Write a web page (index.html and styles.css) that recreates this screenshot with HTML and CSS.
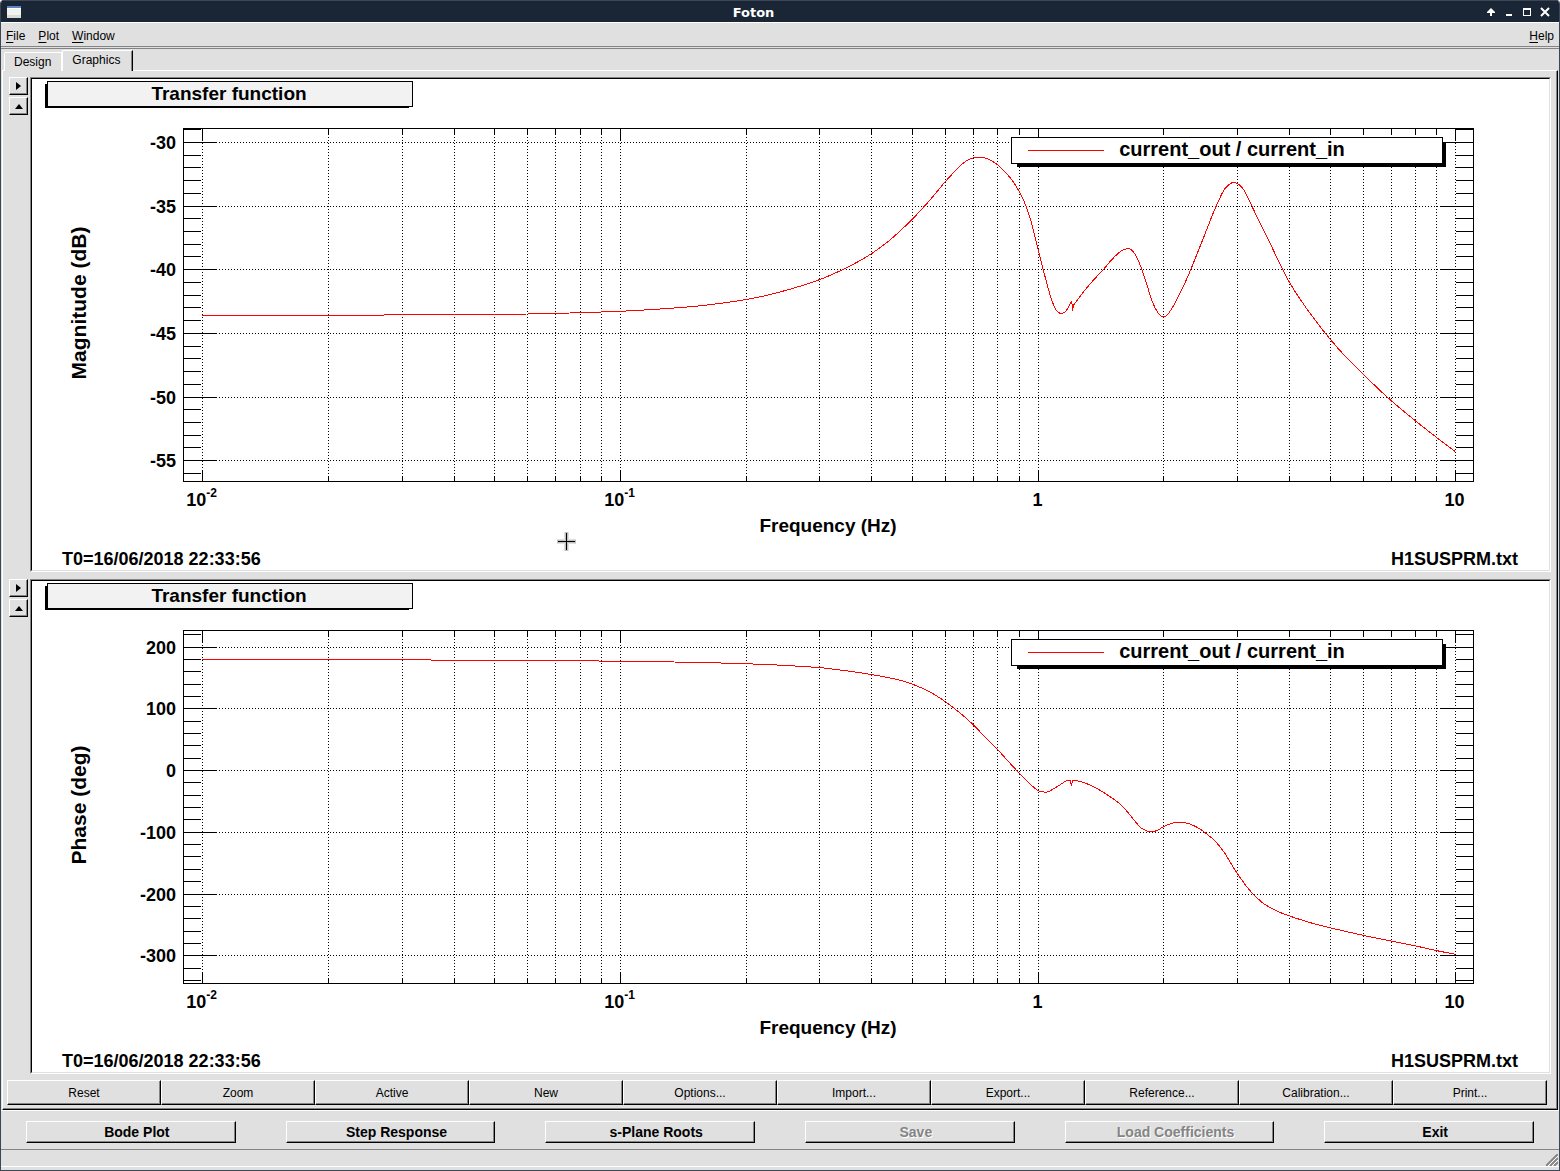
FILE: index.html
```
<!DOCTYPE html>
<html lang="en">
<head>
    <meta charset="UTF-8">
    <meta name="viewport" content="width=device-width, initial-scale=1.0">
    <title>Foton</title>
    <link rel="stylesheet" href="styles.css">
</head>
<body>
    <div class="window">
        <header class="titlebar">
            <svg class="app-icon" width="14" height="12" viewBox="0 0 14 12">
                <rect width="14" height="12" fill="#f2f2ee"/>
                <rect width="14" height="2" fill="#5b87c4"/>
                <rect y="2" width="14" height="1" fill="#ffffff"/>
                <rect y="9" width="14" height="3" fill="#dcdcd6"/>
            </svg>
            <h1 class="title">Foton</h1>
            <div class="window-buttons">
                <button class="winbtn" aria-label="Shade">
                    <svg width="10" height="10" viewBox="0 0 10 10"><path d="M5 1L9 5V6H6V9H4V6H1V5Z" fill="#fff"/></svg>
                </button>
                <button class="winbtn" aria-label="Minimize">
                    <svg width="10" height="10" viewBox="0 0 10 10"><path d="M2 7H8V9H2Z" fill="#fff"/></svg>
                </button>
                <button class="winbtn" aria-label="Maximize">
                    <svg width="10" height="10" viewBox="0 0 10 10"><path d="M1 1H9V9H1ZM2 3V8H8V3Z" fill="#fff" fill-rule="evenodd"/></svg>
                </button>
                <button class="winbtn" aria-label="Close">
                    <svg width="10" height="10" viewBox="0 0 10 10"><path d="M1 1L9 9M9 1L1 9" stroke="#fff" stroke-width="2"/></svg>
                </button>
            </div>
        </header>

        <nav class="menubar">
            <a href="#"><u>F</u>ile</a>
            <a href="#"><u>P</u>lot</a>
            <a href="#"><u>W</u>indow</a>
            <a href="#" class="help"><u>H</u>elp</a>
        </nav>

        <div class="tabs">
            <button class="tab">Design</button>
            <button class="tab active">Graphics</button>
        </div>

        <main class="panel">
            <section class="pad">
                <div class="side">
                    <button class="arrow" aria-label="Options"><svg width="5" height="8" viewBox="0 0 5 8"><path d="M0 0L5 4L0 8Z"/></svg></button>
                    <button class="arrow" aria-label="Collapse"><svg width="8" height="5" viewBox="0 0 8 5"><path d="M0 5L4 0L8 5Z"/></svg></button>
                </div>
                <div class="canvas">
                    <div class="canvas-inner">
                        <svg class="plot" id="magnitude" viewBox="32 79 1517 491">
                            <g class="axes"></g>
                            <path class="shadow" d="M45 84H409V108H45Z"/>
                            <rect class="box title-box" x="47.5" y="81.5" width="365" height="25"/>
                            <text class="heading" x="229" y="100">Transfer function</text>
                            <path class="shadow" d="M1017 142H1446V167H1017Z"/>
                            <rect class="box" x="1011.5" y="137.5" width="431" height="26"/>
                            <path class="curve" d="M1028 150.5H1104"/>
                            <text class="legend" x="1232" y="156">current_out / current_in</text>
                            <text class="ytitle" transform="translate(86 303) rotate(-90)">Magnitude (dB)</text>
                            <text class="heading" x="828" y="532">Frequency (Hz)</text>
                            <text class="note" x="62" y="565">T0=16/06/2018 22:33:56</text>
                            <text class="note end" x="1518" y="565">H1SUSPRM.txt</text>
                            <path class="cross-halo" d="M557 541.5H576M566.5 532V551"/>
                            <path class="cross-edge" d="M557 541.5H576M566.5 532V551"/>
                            <path class="cross" d="M558 541.5H575M566.5 533V550"/>
                        </svg>
                    </div>
                </div>
            </section>

            <section class="pad">
                <div class="side">
                    <button class="arrow" aria-label="Options"><svg width="5" height="8" viewBox="0 0 5 8"><path d="M0 0L5 4L0 8Z"/></svg></button>
                    <button class="arrow" aria-label="Collapse"><svg width="8" height="5" viewBox="0 0 8 5"><path d="M0 5L4 0L8 5Z"/></svg></button>
                </div>
                <div class="canvas">
                    <div class="canvas-inner">
                        <svg class="plot" id="phase" viewBox="32 581 1517 491">
                            <g class="axes"></g>
                            <path class="shadow" d="M45 586H409V610H45Z"/>
                            <rect class="box title-box" x="47.5" y="583.5" width="365" height="25"/>
                            <text class="heading" x="229" y="602">Transfer function</text>
                            <path class="shadow" d="M1017 644H1446V669H1017Z"/>
                            <rect class="box" x="1011.5" y="639.5" width="431" height="26"/>
                            <path class="curve" d="M1028 652.5H1104"/>
                            <text class="legend" x="1232" y="658">current_out / current_in</text>
                            <text class="ytitle" transform="translate(86 805) rotate(-90)">Phase (deg)</text>
                            <text class="heading" x="828" y="1034">Frequency (Hz)</text>
                            <text class="note" x="62" y="1067">T0=16/06/2018 22:33:56</text>
                            <text class="note end" x="1518" y="1067">H1SUSPRM.txt</text>
                        </svg>
                    </div>
                </div>
            </section>

            <div class="toolbar">
                <button>Reset</button>
                <button>Zoom</button>
                <button>Active</button>
                <button>New</button>
                <button>Options...</button>
                <button>Import...</button>
                <button>Export...</button>
                <button>Reference...</button>
                <button>Calibration...</button>
                <button>Print...</button>
            </div>
        </main>

        <div class="actions">
            <button>Bode Plot</button>
            <button>Step Response</button>
            <button>s-Plane Roots</button>
            <button disabled>Save</button>
            <button disabled>Load Coefficients</button>
            <button>Exit</button>
        </div>

        <footer class="statusbar">
            <svg width="12" height="12" viewBox="0 0 12 12">
                <path d="M0 12L12 0M4 12L12 4M8 12L12 8" stroke="#848484" stroke-width="2"/>
                <path d="M2 12L12 2M6 12L12 6" stroke="#fff"/>
            </svg>
        </footer>
    </div>
    <script src="plots.js"></script>
</body>
</html>
```
FILE: styles.css
```
* {
    box-sizing: border-box;
}
body {
    margin: 0;
    background-color: #ffffff;
    color: #000000;
    font-family: "Liberation Sans", Arial, sans-serif;
    font-size: 12px;
}
button {
    margin: 0;
    padding: 0;
    font-family: inherit;
    font-size: inherit;
    color: inherit;
    background-color: #e0e0e0;
    border: 1px solid #ffffff;
    border-right-color: #000000;
    border-bottom-color: #000000;
    box-shadow: inset -1px -1px 0 #848484;
}

.window {
    background-color: #e0e0e0;
    border: 1px solid #3c4654;
    border-top: none;
    border-radius: 4px 4px 0 0;
    overflow: hidden;
}

/* Title bar */
.titlebar {
    display: flex;
    align-items: center;
    height: 22px;
    padding: 0 10px 0 7px;
    margin: 0 -1px;
    background-color: #1a2636;
    border-top: 1px solid #3c4654;
    color: #ffffff;
}
.title {
    flex: 1;
    margin: 0;
    padding-top: 3px;
    font-family: "DejaVu Sans", sans-serif;
    font-size: 13px;
    line-height: 16px;
    text-align: center;
}
.window-buttons {
    display: flex;
    gap: 8px;
    padding-top: 1px;
}
.winbtn {
    display: flex;
    background: none;
    border: none;
    box-shadow: none;
}

/* Menu */
.menubar {
    display: flex;
    gap: 13px;
    height: 25px;
    padding: 6px 5px 0;
    border-top: 1px solid #ffffff;
    border-bottom: 1px solid #848484;
    line-height: 14px;
}
.menubar a {
    color: #000000;
    text-decoration: none;
}
.menubar u {
    text-underline-offset: 2px;
}
.menubar .help {
    margin-left: auto;
}

/* Tabs */
.tabs {
    display: flex;
    align-items: flex-end;
    height: 23px;
    margin-top: 1px;
    padding-left: 3px;
    border-top: 1px solid #848484;
}
.tab {
    height: 19px;
    padding: 0 10px 0 9px;
    border-color: #ffffff;
    border-bottom: none;
    border-radius: 2px 0 0 0;
    box-shadow: none;
}
.tab.active {
    height: 21px;
    padding: 0 12px 2px 9px;
    border-right-color: #000000;
    box-shadow: inset -1px 0 0 #848484;
}

/* Main panel */
.panel {
    margin: -1px 1px 0;
    padding: 6px 0 4px;
    border-top: 1px solid #ffffff;
    border-left: 1px solid #ffffff;
    border-right: 1px solid #000000;
    border-bottom: 1px solid #000000;
    box-shadow: inset -1px -1px 0 #848484;
}
.pad {
    display: flex;
    gap: 2px;
    padding: 0 6px;
    margin-bottom: 7px;
}
.side {
    display: flex;
    flex-direction: column;
    gap: 2px;
    width: 19px;
}
.arrow {
    display: flex;
    align-items: center;
    justify-content: center;
    height: 18px;
}
.canvas {
    flex: 1;
    border: 1px solid #848484;
    border-right-color: #ffffff;
    border-bottom-color: #ffffff;
}
.canvas-inner {
    background-color: #ffffff;
    border: 1px solid #000000;
    border-right-color: #e0e0e0;
    border-bottom-color: #e0e0e0;
}
.toolbar {
    display: flex;
    padding: 0 10px 0 4px;
    margin-top: -1px;
}
.toolbar button {
    flex: 1;
    height: 25px;
}

/* Plots */
.plot {
    display: block;
    width: 100%;
    font-weight: bold;
    font-size: 18px;
}
.plot path,
.plot rect {
    fill: none;
    stroke: #000000;
    shape-rendering: crispEdges;
}
.plot .grid {
    stroke-dasharray: 1 2;
}
.plot .curve {
    stroke: #ff0000;
}
.plot .shadow {
    fill: #000000;
    stroke: none;
}
.plot .box {
    fill: #ffffff;
}
.plot .title-box {
    fill: #f2f2f2;
}
.heading,
.legend,
.ytitle,
.xlabel {
    text-anchor: middle;
}
.heading {
    font-size: 19px;
}
.legend {
    font-size: 20px;
}
.ytitle {
    font-size: 21px;
}
.ylabel,
.end {
    text-anchor: end;
}
.exponent {
    font-size: 12px;
}
.plot .cross-halo {
    stroke: #e0e0e0;
    stroke-width: 5;
}
.plot .cross-edge {
    stroke: #c0c0c0;
    stroke-width: 3;
}

/* Bottom buttons */
.actions {
    display: flex;
    gap: 50px;
    padding: 10px 25px 6px;
    border-top: 1px solid #ffffff;
}
.actions button {
    flex: 1 1 0;
    height: 22px;
    padding-left: 12px;
    font-size: 14px;
    font-weight: bold;
    white-space: nowrap;
}
.actions button:disabled {
    color: #848484;
    text-shadow: 1px 1px 0 #ffffff;
}
.statusbar {
    display: flex;
    justify-content: flex-end;
    align-items: flex-end;
    height: 18px;
    padding-right: 1px;
    margin-bottom: 3px;
    border-top: 1px solid #848484;
    border-bottom: 1px solid #ffffff;
}
```
FILE: plots.js
```
// x position of 0.01 Hz and width of one decade
var X0 = 202.8;
var DECADE = 417.7;
var LEFT = 183, RIGHT = 1473, HEIGHT = 353;

function xPos(hz) {
    return Math.floor(X0 + DECADE * (Math.log10(hz) + 2)) + 0.5;
}

// Smooth line through a list of [x, y, x, y, ...]
function smooth(p) {
    var n = p.length / 2;
    var d = 'M' + p[0] + ' ' + p[1];
    function at(i) {
        i = Math.max(0, Math.min(n - 1, i));
        return [p[2 * i], p[2 * i + 1]];
    }
    for (var i = 0; i < n - 1; i++) {
        var a = at(i - 1), b = at(i), c = at(i + 1), e = at(i + 2);
        d += 'C' + [
            b[0] + (c[0] - a[0]) / 6, b[1] + (c[1] - a[1]) / 6,
            c[0] - (e[0] - b[0]) / 6, c[1] - (e[1] - b[1]) / 6,
            c[0], c[1]
        ].join(' ');
    }
    return d;
}

function drawAxes(id, o) {
    var top = o.top, bottom = o.top + HEIGHT;
    var ticks = '', grid = '', labels = '';

    // Frequency axis
    for (var dec = -2; dec <= 1; dec++) {
        for (var k = 1; k < 10; k++) {
            if (dec === 1 && k > 1) break;
            var x = xPos(k * Math.pow(10, dec));
            var len = k === 1 ? 12 : 6;
            grid += 'M' + x + ' ' + top + 'V' + bottom;
            ticks += 'M' + x + ' ' + top + 'v' + len + 'M' + x + ' ' + (bottom + 1) + 'v-' + len;
        }
        var lx = xPos(Math.pow(10, dec)) - 1;
        var text = dec < 0 ? '10<tspan class="exponent" dy="-9">' + dec + '</tspan>' : Math.pow(10, dec);
        labels += '<text class="xlabel" x="' + lx + '" y="' + (bottom + 25) + '">' + text + '</text>';
    }

    // Value axis
    for (var v = o.min; v <= o.max; v += o.minor) {
        var y = Math.floor(o.y0 - (v - o.v0) * o.scale) + 0.5;
        var major = v % o.major === 0;
        ticks += 'M' + LEFT + ' ' + y + 'h' + (major ? 34 : 18);
        ticks += 'M' + (RIGHT + 1) + ' ' + y + 'h-' + (major ? 34 : 18);
        if (major) {
            grid += 'M' + LEFT + ' ' + y + 'H' + RIGHT;
            labels += '<text class="ylabel" x="176" y="' + (y + 6.5) + '">' + v + '</text>';
        }
    }

    document.querySelector('#' + id + ' .axes').innerHTML =
        '<path class="grid" d="' + grid + '"/>' +
        '<path d="' + ticks + '"/>' +
        '<rect x="' + (LEFT + 0.5) + '" y="' + (top + 0.5) + '" width="' + (RIGHT - LEFT) + '" height="' + HEIGHT + '"/>' +
        labels +
        '<path class="curve" d="' + smooth(o.points) + '"/>';
}

drawAxes('magnitude', {
    top: 128, y0: 142.4, v0: -30, scale: 12.73,
    min: -56, max: -29, minor: 1, major: 5,
    points: [
        202, 315.6, 300, 315.5, 384, 315, 460, 314.6, 528, 314, 570, 313, 620, 311.3, 660, 309,
        700, 305.8, 746, 299.5, 780, 292, 820, 279.5, 850, 266, 871, 254, 890, 240, 912, 219.5,
        930, 200, 945, 182, 960, 166, 967, 160.5, 975, 157.5, 983, 157.5, 990, 160, 998, 165,
        1005, 172, 1012, 180, 1020, 193, 1026, 206, 1031, 221, 1035, 237, 1039, 253, 1043, 269,
        1047, 284, 1051, 298, 1055, 308, 1058, 312, 1061, 313.5, 1065, 312, 1068, 308, 1071.5, 301.5,
        1072.5, 310, 1074, 304.5, 1079, 298, 1085, 290, 1094, 279.5, 1103, 270, 1111, 260.5,
        1118, 253.5, 1124, 249.5, 1131, 249.5, 1136, 256, 1141, 267, 1147, 285, 1152, 301,
        1158, 313, 1163, 317, 1168, 314, 1175, 303, 1184, 285, 1191, 269, 1197, 254, 1205, 234,
        1212, 216, 1218, 202, 1224, 190, 1229, 184.5, 1234, 182.5, 1239, 184.5, 1244, 190, 1250, 202,
        1258, 219, 1269, 241, 1279, 262, 1289, 281.5, 1300, 299, 1315, 320, 1330, 339, 1345, 356,
        1364, 375, 1378, 388.5, 1391, 400.5, 1415, 420.5, 1436, 437, 1455, 451.5
    ]
});

drawAxes('phase', {
    top: 630, y0: 647.2, v0: 200, scale: 0.617,
    min: -340, max: 220, minor: 20, major: 100,
    points: [
        202, 659.4, 300, 659.6, 431, 660, 520, 660.5, 599, 661, 674, 662, 721, 663, 753, 664,
        777, 665, 795, 666, 811, 667, 824, 668, 840, 670, 855, 672, 871, 674.5, 885, 677, 899, 680,
        912, 684, 930, 692, 945, 701.5, 960, 713, 973, 724.5, 985, 737, 997, 749, 1008, 761,
        1019, 773, 1030, 784, 1038, 790.5, 1042, 791.8, 1048, 791.8, 1055, 788, 1062, 783.5,
        1067, 780.5, 1070, 780.5, 1071.5, 785, 1073, 780.5, 1080, 781.5, 1090, 785, 1103, 792,
        1120, 804, 1130, 815, 1140, 827, 1147, 831, 1151, 832, 1157, 830.5, 1163, 827, 1170, 824,
        1176, 822.5, 1183, 822.5, 1190, 824, 1200, 829, 1208, 835, 1215, 841, 1224, 852, 1230, 862,
        1237, 873, 1247, 887, 1255, 896, 1265, 904.5, 1278, 911.5, 1289, 915.8, 1300, 919.5,
        1315, 924, 1331, 928, 1364, 935.5, 1391, 941, 1415, 945.8, 1436, 950.5, 1455, 954.2
    ]
});
```
